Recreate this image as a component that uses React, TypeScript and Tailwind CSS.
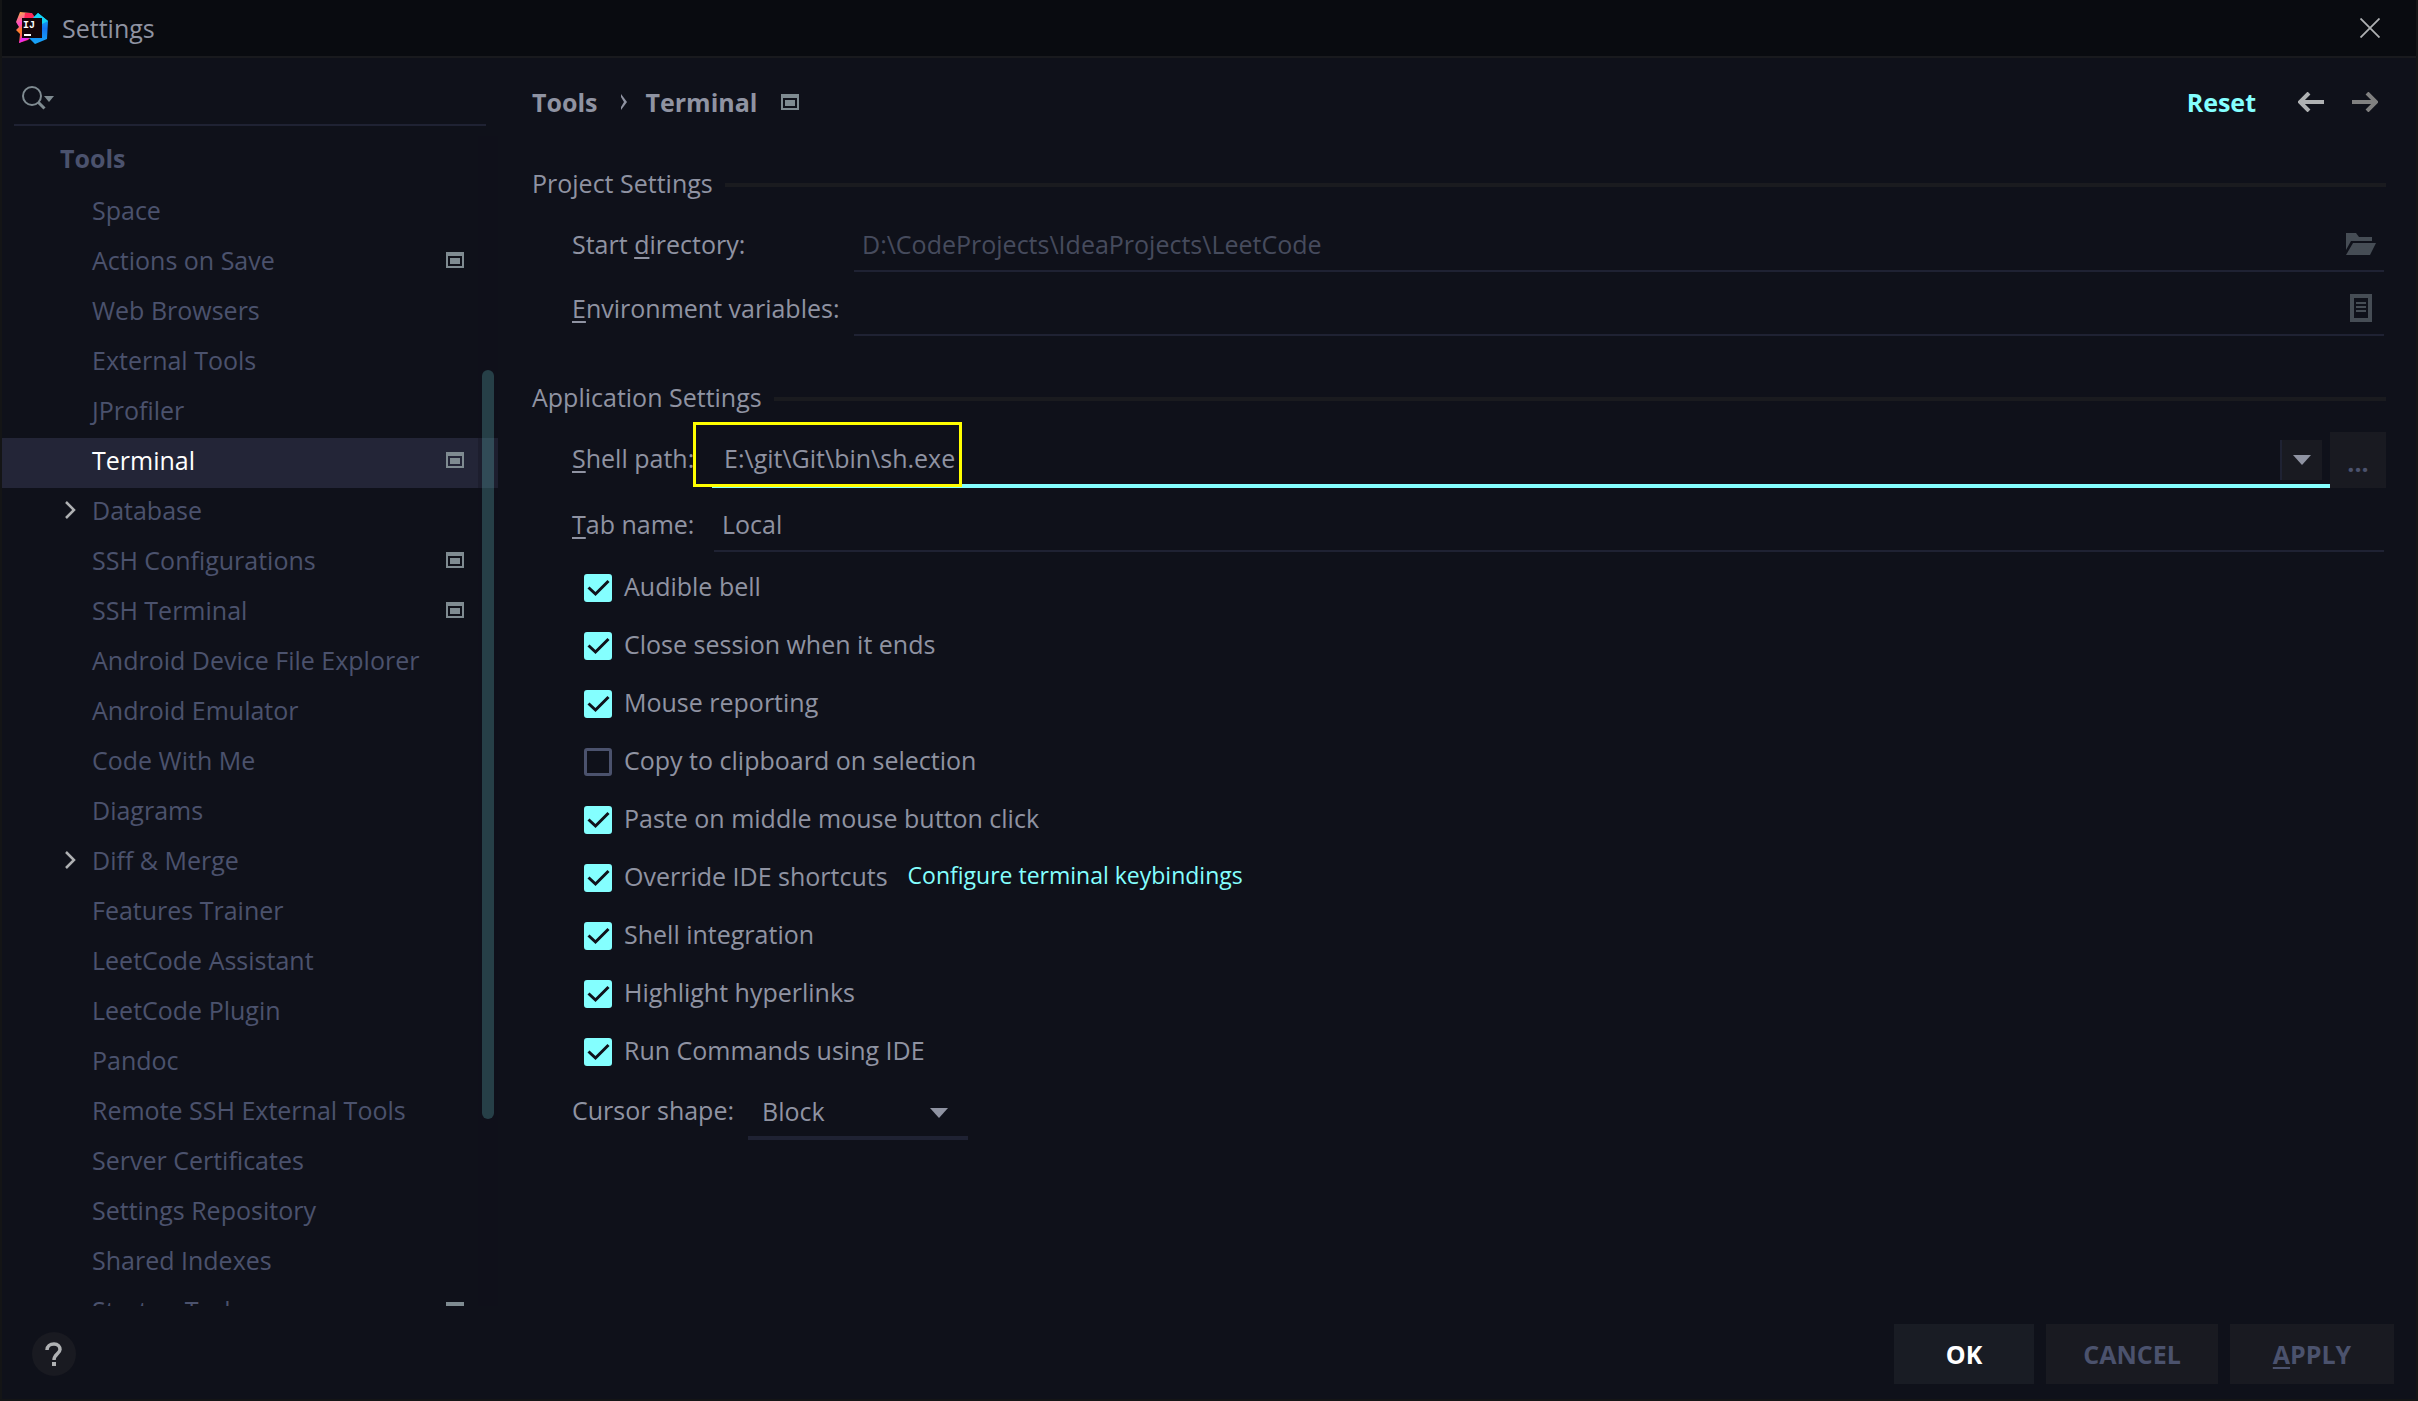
import { useState } from "react";
import clsx from "clsx";

type TreeItem = {
  name: string;
  project?: boolean;
  expandable?: boolean;
};

const tree: TreeItem[] = [
  { name: "Space" },
  { name: "Actions on Save", project: true },
  { name: "Web Browsers" },
  { name: "External Tools" },
  { name: "JProfiler" },
  { name: "Terminal", project: true },
  { name: "Database", expandable: true },
  { name: "SSH Configurations", project: true },
  { name: "SSH Terminal", project: true },
  { name: "Android Device File Explorer" },
  { name: "Android Emulator" },
  { name: "Code With Me" },
  { name: "Diagrams" },
  { name: "Diff & Merge", expandable: true },
  { name: "Features Trainer" },
  { name: "LeetCode Assistant" },
  { name: "LeetCode Plugin" },
  { name: "Pandoc" },
  { name: "Remote SSH External Tools" },
  { name: "Server Certificates" },
  { name: "Settings Repository" },
  { name: "Shared Indexes" },
  { name: "Startup Tasks", project: true },
];

const options = [
  { id: "bell", label: "Audible bell", checked: true },
  { id: "close", label: "Close session when it ends", checked: true },
  { id: "mouse", label: "Mouse reporting", checked: true },
  { id: "copy", label: "Copy to clipboard on selection", checked: false },
  { id: "paste", label: "Paste on middle mouse button click", checked: true },
  { id: "override", label: "Override IDE shortcuts", checked: true, link: "Configure terminal keybindings" },
  { id: "shell", label: "Shell integration", checked: true },
  { id: "links", label: "Highlight hyperlinks", checked: true },
  { id: "run", label: "Run Commands using IDE", checked: true },
];

function IdeaLogo() {
  return (
    <svg className="h-8 w-8" viewBox="0 0 32 32" aria-hidden="true">
      <defs>
        <linearGradient id="warm" x1="0" y1="0" x2="0.3" y2="1">
          <stop offset="0" stopColor="#fdb833" />
          <stop offset="0.4" stopColor="#ff45c8" />
          <stop offset="0.6" stopColor="#fd8224" />
          <stop offset="1" stopColor="#ff2d8a" />
        </linearGradient>
        <linearGradient id="cool" x1="0" y1="0" x2="0" y2="1">
          <stop offset="0" stopColor="#14c4f0" />
          <stop offset="0.5" stopColor="#1476f2" />
          <stop offset="1" stopColor="#18a8f8" />
        </linearGradient>
      </defs>
      <path d="M4 0 15 1 20 7 14 26 12 28 3 31 4 22 0 18 3 15 0 10Z" fill="url(#warm)" />
      <path d="M9 1 16 1 20 7 8 8Z" fill="#fe2857" />
      <path d="M22 1 32 9 31 27 19 32 13 26 20 18 17 6Z" fill="url(#cool)" />
      <path d="M22 1 32 9 26 12 17 6Z" fill="#12d4f5" />
      <path d="M3 31 6 24 14 26Z" fill="#e82cf0" />
      <rect x="6" y="6" width="20" height="20" fill="#140509" />
      <text x="7" y="16" fill="#fff" fontFamily="Liberation Mono, monospace" fontWeight="bold" fontSize="10">
        IJ
      </text>
      <rect x="8" y="22" width="7" height="2" fill="#fff" />
    </svg>
  );
}

function ProjectIcon() {
  return (
    <svg className="h-4 w-[18px] shrink-0" viewBox="0 0 18 16" aria-hidden="true">
      <path fillRule="evenodd" d="M0 0h18v16H0zM2 4v10h14V4z" fill="#7f8b91" />
      <rect x="4" y="6" width="10" height="6" fill="#7f8b91" />
    </svg>
  );
}

function DownArrow({ className }: { className?: string }) {
  return (
    <svg className={clsx("h-2.5 w-[18px]", className)} viewBox="0 0 18 10" aria-hidden="true">
      <path d="M0 0h18L9 10z" fill="#8f93a2" />
    </svg>
  );
}

function SectionTitle({ children, className }: { children: string; className?: string }) {
  return (
    <div className={clsx("flex h-[34px] items-center gap-3", className)}>
      <h2>{children}</h2>
      <div className="mt-1 h-1 flex-1 bg-[#1a1b1f]" />
    </div>
  );
}

function Mnemonic({ children }: { children: string }) {
  return <u className="decoration-2 underline-offset-3">{children}</u>;
}

function Sidebar() {
  const [selected, setSelected] = useState("Terminal");

  return (
    <aside className="flex w-[496px] shrink-0 flex-col">
      <div className="mx-3 flex h-[68px] items-center border-b-2 border-[#1f2233]">
        <svg className="mt-3.5 ml-2 h-6 w-8 shrink-0" viewBox="0 0 32 24" aria-hidden="true">
          <circle cx="10" cy="10" r="9" fill="none" stroke="#7f8b91" strokeWidth="2" />
          <path d="M16.500 16.500 22.500 22.500" stroke="#7f8b91" strokeWidth="3" />
          <path d="M22 10h10l-5 6z" fill="#7f8b91" />
        </svg>
        <input type="text" aria-label="Search settings" className="h-full min-w-0 flex-1 bg-transparent px-2 outline-none" />
      </div>

      <nav className="relative mt-2.5 min-h-0 flex-1 overflow-hidden text-[#4b526d]">
        <h2 className="flex h-[52px] items-center pb-2 pl-[58px] font-bold">Tools</h2>
        <ul>
          {tree.map((item) => (
            <li key={item.name}>
              <button
                type="button"
                onClick={() => setSelected(item.name)}
                className={clsx(
                  "flex h-[50px] w-full items-center pr-[34px] pb-1.5 pl-[62px] text-left",
                  selected === item.name && "bg-[#232537] text-white"
                )}
              >
                <span className="w-7 shrink-0">
                  {item.expandable && (
                    <svg className="h-[18px] w-3" viewBox="0 0 12 18" fill="none" aria-hidden="true">
                      <path d="m2 1 8 8-8 8" stroke="#afb1b3" strokeWidth="2.500" />
                    </svg>
                  )}
                </span>
                <span className="flex-1 whitespace-nowrap">{item.name}</span>
                {item.project && <ProjectIcon />}
              </button>
            </li>
          ))}
        </ul>

        {/* scrollbar */}
        <div className="absolute inset-y-0 right-0 w-5 bg-[#0f111a]/30">
          <div className="absolute top-[20%] left-1 h-[64%] w-3 rounded-full bg-[#84ffff]/20" />
        </div>
      </nav>
    </aside>
  );
}

function ProjectSettings() {
  return (
    <section>
      <SectionTitle className="mt-10">Project Settings</SectionTitle>
      <div className="mt-[18px] grid grid-cols-[282px_1fr] gap-y-2.5 pr-0.5 pl-10">
        <label htmlFor="start-dir" className="flex h-[52px] items-center">
          <span>
            Start <Mnemonic>d</Mnemonic>irectory:
          </span>
        </label>
        <div className="flex h-[54px] items-center border-b-2 border-[#1f2233] pr-2">
          <input
            id="start-dir"
            type="text"
            placeholder="D:\CodeProjects\IdeaProjects\LeetCode"
            className="h-full min-w-0 flex-1 bg-transparent px-2 outline-none placeholder:text-[#464b5d]"
          />
          <button type="button" aria-label="Browse">
            <svg className="h-[22px] w-[30px]" viewBox="0 0 30 22" fill="#464d55" aria-hidden="true">
              <path d="M0 0h10l3 4h13v4H5L0 17z" />
              <path d="M7 10h23l-6 12H0z" />
            </svg>
          </button>
        </div>

        <label htmlFor="env-vars" className="flex h-[52px] items-center">
          <span>
            <Mnemonic>E</Mnemonic>nvironment variables:
          </span>
        </label>
        <div className="flex h-[54px] items-center border-b-2 border-[#1f2233] pr-3">
          <input id="env-vars" type="text" className="h-full min-w-0 flex-1 bg-transparent px-2 outline-none" />
          <button type="button" aria-label="Edit variables">
            <svg className="h-7 w-[22px]" viewBox="0 0 22 28" fill="#464d55" aria-hidden="true">
              <path fillRule="evenodd" d="M0 0h22v28H0zM4 4v20h14V4z" />
              <path d="M6 8h10v2H6zM6 12h10v2H6zM6 16h10v2H6z" />
            </svg>
          </button>
        </div>
      </div>
    </section>
  );
}

function ApplicationSettings() {
  return (
    <section>
      <SectionTitle className="mt-11">Application Settings</SectionTitle>
      <div className="relative mt-[18px] flex h-14 pl-10">
        <label htmlFor="shell-path" className="flex h-[52px] w-[140px] shrink-0 items-center">
          <span>
            <Mnemonic>S</Mnemonic>hell path:
          </span>
        </label>
        <div className="flex flex-1 border-b-4 border-[#84ffff] pr-2">
          <input
            id="shell-path"
            type="text"
            defaultValue="E:\git\Git\bin\sh.exe"
            className="h-full min-w-0 flex-1 bg-transparent px-3 outline-none"
          />
          <button
            type="button"
            aria-label="Recent shells"
            className="mt-2 flex h-10 w-[42px] items-center justify-center border-l-2 border-[#1f2233] bg-[#191a21]"
          >
            <DownArrow />
          </button>
        </div>
        <button type="button" aria-label="Browse shell" className="w-14 bg-[#191a21] pt-1 font-bold text-[#4b526d]">
          ...
        </button>
        {/* highlight frame */}
        <div className="pointer-events-none absolute -top-2.5 left-[161px] h-[65px] w-[269px] border-3 border-[#ffff00]" />
      </div>

      <div className="mt-2.5 flex pr-0.5 pl-10">
        <label htmlFor="tab-name" className="flex h-[52px] w-[142px] shrink-0 items-center">
          <span>
            <Mnemonic>T</Mnemonic>ab name:
          </span>
        </label>
        <input
          id="tab-name"
          type="text"
          defaultValue="Local"
          className="h-[54px] min-w-0 flex-1 border-b-2 border-[#1f2233] bg-transparent px-2 outline-none"
        />
      </div>

      <ul className="mt-[7px] pl-[52px]">
        {options.map((option) => (
          <li key={option.id} className="flex h-[58px] items-center">
            <span className="relative h-7 w-7 shrink-0">
              <input
                id={option.id}
                type="checkbox"
                defaultChecked={option.checked}
                className="peer block h-7 w-7 appearance-none rounded-[3px] border-3 border-[#4b526d] checked:border-[#84ffff] checked:bg-[#84ffff]"
              />
              <svg
                className="pointer-events-none absolute inset-0 hidden h-7 w-7 peer-checked:block"
                viewBox="0 0 28 28"
                fill="none"
                aria-hidden="true"
              >
                <path d="m4.500 13.500 7 6.500L24.500 7" stroke="#0f111a" strokeWidth="3" />
              </svg>
            </span>
            <label htmlFor={option.id} className="pb-1 pl-3">
              {option.label}
            </label>
            {option.link && (
              <a href="#keybindings" className="ml-5 pb-1.5 text-[23px] text-[#84ffff]">
                {option.link}
              </a>
            )}
          </li>
        ))}
      </ul>

      <div className="mt-[5px] flex pl-10">
        <label htmlFor="cursor-shape" className="flex h-12 w-44 shrink-0 items-center">
          Cursor shape:
        </label>
        <div className="relative w-[220px]">
          <select
            id="cursor-shape"
            defaultValue="Block"
            className="h-[54px] w-full appearance-none border-b-4 border-[#1f2233] bg-transparent pl-3.5 outline-none"
          >
            <option>Block</option>
            <option>Underline</option>
            <option>Vertical</option>
          </select>
          <DownArrow className="pointer-events-none absolute top-[22px] right-5" />
        </div>
      </div>
    </section>
  );
}

export default function App() {
  return (
    <div className="relative flex h-screen flex-col overflow-hidden bg-[#141516] px-0.5 pb-0.5 font-['Open_Sans','Noto_Sans',sans-serif] text-[25px] leading-8 text-[#8f93a2]">
      <header className="flex h-[58px] shrink-0 items-center border-b-2 border-[#191a1e] bg-[#090b10] pr-9 pl-3.5">
        <IdeaLogo />
        <h1 className="flex-1 pl-3.5">Settings</h1>
        <button type="button" aria-label="Close">
          <svg className="h-5 w-5" viewBox="0 0 20 20" aria-hidden="true">
            <path d="m0.500 0.500 19 19M19.500 0.500l-19 19" stroke="#afb1b3" strokeWidth="1.800" />
          </svg>
        </button>
      </header>

      <div className="flex min-h-0 flex-1 bg-[#0f111a]">
        <Sidebar />
        <main className="min-w-0 flex-1 pt-5 pr-[30px] pl-[34px]">
          <div className="flex h-12 items-center font-bold">
            <span>Tools</span>
            <svg className="mr-[18px] ml-[22px] h-4 w-2" viewBox="0 0 8 16" aria-hidden="true">
              <path d="M1 0 7 8 1 16V13L4 8 1 3z" fill="#8f93a2" />
            </svg>
            <span className="pr-6">Terminal</span>
            <ProjectIcon />
            <div className="flex-1" />
            <button type="button" className="text-[#84ffff]">
              Reset
            </button>
            <button type="button" aria-label="Back" className="ml-[42px]">
              <svg className="h-5 w-[26px]" viewBox="0 0 26 20" fill="none" aria-hidden="true">
                <path d="M26 10H3M11 1 2 10l9 9" stroke="#afb1b3" strokeWidth="4" />
              </svg>
            </button>
            <button type="button" aria-label="Forward" className="mr-2 ml-7">
              <svg className="h-5 w-[26px]" viewBox="0 0 26 20" fill="none" aria-hidden="true">
                <path d="M0 10h23M15 1l9 9-9 9" stroke="#808080" strokeWidth="4" />
              </svg>
            </button>
          </div>
          <ProjectSettings />
          <ApplicationSettings />
        </main>
      </div>

      <footer className="flex shrink-0 items-center bg-[#0f111a] pt-[18px] pr-[22px] pb-[15px] pl-[30px] font-bold">
        <button type="button" aria-label="Help" className="flex h-11 w-11 items-center justify-center rounded-full bg-[#191a21]">
          <svg className="h-6 w-[18px]" viewBox="0 0 18 24" fill="none" aria-hidden="true">
            <path d="M2 8C2 4 5 2 9 2s6 2.500 6 5.500c0 4-6 5-6 10.500" stroke="#afb1b3" strokeWidth="3.500" />
            <rect x="7" y="20" width="4" height="4" fill="#afb1b3" />
          </svg>
        </button>
        <div className="flex-1" />
        <div className="flex gap-3">
          <button type="button" className="h-[60px] w-[140px] bg-[#191c24] text-white">
            OK
          </button>
          <button type="button" className="h-[60px] w-[172px] bg-[#191a21] text-[#4b526d]">
            CANCEL
          </button>
          <button type="button" className="h-[60px] w-[164px] bg-[#191a21] text-[#4b526d]">
            <Mnemonic>A</Mnemonic>PPLY
          </button>
        </div>
      </footer>
    </div>
  );
}
